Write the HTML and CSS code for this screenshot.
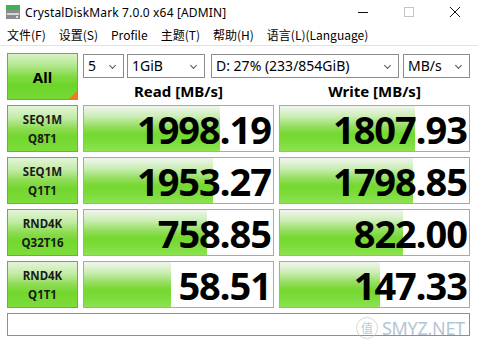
FILE: index.html
```html
<!DOCTYPE html>
<html lang="zh-CN">
<head>
<meta charset="utf-8">
<title>CrystalDiskMark 7.0.0 x64 [ADMIN]</title>
<link rel="stylesheet" href="styles.css">
</head>
<body>
<div class="window">
  <div class="titlebar">
    <svg class="app-icon" width="14" height="14" viewBox="0 0 14 14">
      <rect x="0" y="0" width="14" height="5" fill="#3fb34f"/>
      <rect x="0" y="5" width="14" height="9" fill="#8c8c8c"/>
      <rect x="1" y="8" width="12" height="2" fill="#d8d8d8"/>
      <rect x="10" y="11" width="2" height="2" fill="#e0e0e0"/>
    </svg>
    <span class="title">CrystalDiskMark 7.0.0 x64 [ADMIN]</span>
    <div class="controls">
      <svg class="ctl" width="46" height="24" viewBox="0 0 46 24"><line x1="18" y1="12.5" x2="28" y2="12.5" stroke="#111" stroke-width="1"/></svg>
      <svg class="ctl" width="46" height="24" viewBox="0 0 46 24"><rect x="18.5" y="7.5" width="9" height="9" fill="none" stroke="#c4c4c4" stroke-width="1"/></svg>
      <svg class="ctl" width="46" height="24" viewBox="0 0 46 24"><path d="M18 7 L28 17 M28 7 L18 17" stroke="#111" stroke-width="1"/></svg>
    </div>
  </div>
  <div class="menubar">
    <span class="menu-item">文件(F)</span>
    <span class="menu-item">设置(S)</span>
    <span class="menu-item">Profile</span>
    <span class="menu-item">主题(T)</span>
    <span class="menu-item">帮助(H)</span>
    <span class="menu-item">语言(L)(Language)</span>
  </div>
  <div class="main">
    <div class="all-btn"><span>All</span><i class="corner"></i></div>
    <div class="top-right">
      <div class="selects">
        <div class="select s-count">5<i class="chev"></i></div>
        <div class="select s-size">1GiB<i class="chev"></i></div>
        <div class="select s-drive">D: 27% (233/854GiB)<i class="chev"></i></div>
        <div class="select s-unit">MB/s<i class="chev"></i></div>
      </div>
      <div class="headers">
        <div class="head">Read [MB/s]</div>
        <div class="head">Write [MB/s]</div>
      </div>
    </div>

    <div class="label"><span>SEQ1M</span><span>Q8T1</span></div>
    <div class="value"><div class="bar" style="width:72%"></div><span class="num">1998.19</span></div>
    <div class="value"><div class="bar" style="width:71.5%"></div><span class="num">1807.93</span></div>

    <div class="label"><span>SEQ1M</span><span>Q1T1</span></div>
    <div class="value"><div class="bar" style="width:68.5%"></div><span class="num">1953.27</span></div>
    <div class="value"><div class="bar" style="width:70.5%"></div><span class="num">1798.85</span></div>

    <div class="label"><span>RND4K</span><span>Q32T16</span></div>
    <div class="value"><div class="bar" style="width:65%"></div><span class="num">758.85</span></div>
    <div class="value"><div class="bar" style="width:65%"></div><span class="num">822.00</span></div>

    <div class="label"><span>RND4K</span><span>Q1T1</span></div>
    <div class="value"><div class="bar" style="width:46%"></div><span class="num">58.51</span></div>
    <div class="value"><div class="bar" style="width:53%"></div><span class="num">147.33</span></div>

    <div class="comment"></div>
  </div>
  <div class="watermark"><span class="wm-circle">值</span><span class="wm-text">SMYZ.NET</span></div>
</div>
</body>
</html>
```
FILE: styles.css
```css
html, body {
  margin: 0;
  padding: 0;
  background: #ffffff;
}
body {
  width: 478px;
  height: 345px;
  overflow: hidden;
  font-family: "Noto Sans", "Noto Sans CJK SC", sans-serif;
  color: #000;
}
.window {
  position: relative;
  width: 478px;
  height: 345px;
  background: #fff;
}
.titlebar {
  height: 24px;
  display: flex;
  align-items: center;
}
.app-icon {
  margin-left: 6px;
}
.title {
  margin-left: 5px;
  font-size: 12px;
  letter-spacing: 0.15px;
  font-family: "Noto Sans", sans-serif;
  color: #000;
}
.controls {
  margin-left: auto;
  display: flex;
  align-self: flex-start;
}
.ctl {
  display: block;
}
.menubar {
  height: 21px;
  display: flex;
  align-items: center;
  padding-left: 7px;
  border-bottom: 1px solid #e3e3e3;
  font-family: "Noto Sans CJK SC", "Noto Sans", sans-serif;
  font-size: 12px;
}
.menu-item {
  margin-right: 13px;
}
.main {
  display: grid;
  grid-template-columns: 71px 191px 191px;
  grid-template-rows: 47px 47px 47px 47px 47px 23px;
  column-gap: 5px;
  row-gap: 5px;
  padding: 7px 8px 0 7px;
}
.all-btn {
  position: relative;
  box-sizing: border-box;
  border: 1px solid #8f8f8f;
  background: linear-gradient(to bottom, #d9f2c6 0%, #b4e890 25%, #80db42 50%, #6cd52a 70%, #76da35 100%);
  display: flex;
  align-items: center;
  justify-content: center;
  font-weight: 700;
  font-size: 15px;
}
.corner {
  position: absolute;
  right: 0;
  bottom: 0;
  width: 0;
  height: 0;
  border-left: 8px solid transparent;
  border-bottom: 8px solid #f07a1e;
}
.top-right {
  grid-column: 2 / 4;
  display: flex;
  flex-direction: column;
}
.selects {
  display: flex;
  margin-top: 1px;
  height: 24px;
}
.select {
  position: relative;
  box-sizing: border-box;
  height: 24px;
  border: 1px solid #8c8c8c;
  background: #fff;
  font-size: 14px;
  line-height: 22px;
  padding-left: 4px;
  white-space: nowrap;
}
.s-count { width: 41px; margin-right: 3px; }
.s-size { width: 78px; margin-right: 6px; }
.s-drive { width: 188px; margin-right: 4px; }
.s-unit { width: 67px; }
.chev {
  position: absolute;
  right: 8px;
  top: 8px;
  width: 4px;
  height: 4px;
  border-right: 1px solid #555;
  border-bottom: 1px solid #555;
  transform: rotate(45deg);
}
.headers {
  display: grid;
  grid-template-columns: 191px 191px;
  column-gap: 5px;
  flex: 1;
}
.head {
  text-align: center;
  font-weight: 700;
  font-size: 15px;
  line-height: 20px;
  padding-top: 3px;
}
.label {
  box-sizing: border-box;
  border: 1px solid #8f8f8f;
  background: linear-gradient(to bottom, #e2f4d5 0%, #c4ecaa 25%, #8ddc52 50%, #72d72e 68%, #7ddc3c 100%);
  display: flex;
  flex-direction: column;
  align-items: center;
  justify-content: center;
  font-weight: 700;
  font-size: 11.5px;
  line-height: 19px;
  color: #1a1a1a;
}
.value {
  position: relative;
  box-sizing: border-box;
  border: 1px solid #a9a9a9;
  background: #fff;
  display: flex;
  align-items: center;
  justify-content: flex-end;
}
.bar {
  position: absolute;
  left: 0;
  top: 0;
  bottom: 0;
  background: linear-gradient(to bottom, #f1f5ee 0%, #cdeeb8 22%, #8fdd56 48%, #74d82f 62%, #7ddd3c 82%, #8ee253 100%);
}
.num {
  position: relative;
  font-weight: 700;
  font-size: 38px;
  line-height: 40px;
  padding-right: 2px;
  letter-spacing: -1px;
  color: #000;
}
.comment {
  grid-column: 1 / 4;
  box-sizing: border-box;
  border: 1px solid #8f8f8f;
  background: #fff;
}
.watermark {
  position: absolute;
  left: 356px;
  top: 316px;
  display: flex;
  align-items: center;
  gap: 4px;
  opacity: 0.75;
}
.wm-circle {
  width: 20px;
  height: 20px;
  border-radius: 50%;
  border: 1px solid #c8ccd0;
  font-family: "Noto Sans CJK SC", sans-serif;
  font-size: 12px;
  line-height: 20px;
  text-align: center;
  color: #b0b4b8;
}
.wm-text {
  font-family: "Noto Sans", sans-serif;
  font-size: 18px;
  color: #9ab4c6;
  letter-spacing: -0.3px;
}
```
